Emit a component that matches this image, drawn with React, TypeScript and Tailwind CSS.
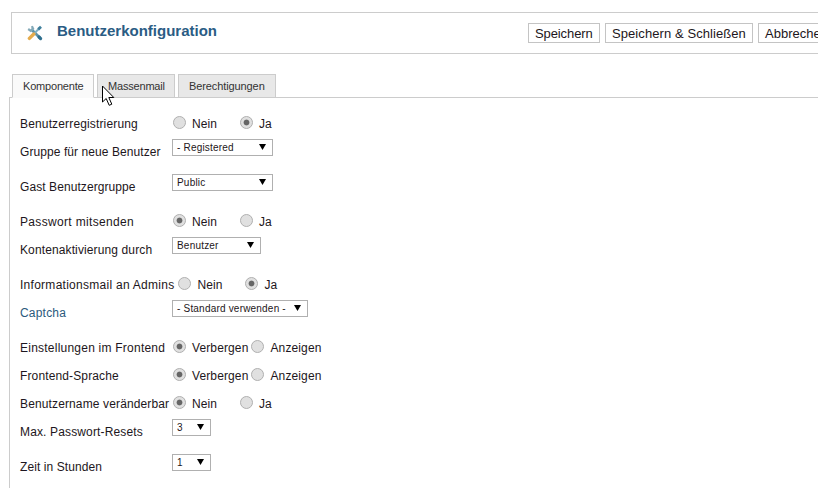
import React from "react";

type Field = {
    label: string;
    labelClass?: string;
    options?: string[];
    selected?: number;
    value?: string;
    width?: string;
};

const FIELDS: Field[] = [
    { label: "Benutzerregistrierung", labelClass: "tracking-[0.15px]", options: ["Nein", "Ja"], selected: 1 },
    { label: "Gruppe für neue Benutzer", labelClass: "tracking-[0.08px]", value: "- Registered", width: "w-[101px]" },
    { label: "Gast Benutzergruppe", labelClass: "tracking-[0.08px]", value: "Public", width: "w-[101px]" },
    { label: "Passwort mitsenden", labelClass: "tracking-[0.33px]", options: ["Nein", "Ja"], selected: 0 },
    { label: "Kontenaktivierung durch", labelClass: "tracking-[0.12px]", value: "Benutzer", width: "w-[89px]" },
    { label: "Informationsmail an Admins", labelClass: "tracking-[0.27px] pr-[3px]", options: ["Nein", "Ja"], selected: 1 },
    { label: "Captcha", labelClass: "text-[#2c5a7c]", value: "- Standard verwenden -", width: "w-[136px]" },
    { label: "Einstellungen im Frontend", labelClass: "tracking-[0.23px]", options: ["Verbergen", "Anzeigen"], selected: 0 },
    { label: "Frontend-Sprache", labelClass: "tracking-[0.13px]", options: ["Verbergen", "Anzeigen"], selected: 0 },
    { label: "Benutzername veränderbar", labelClass: "tracking-[0.13px]", options: ["Nein", "Ja"], selected: 0 },
    { label: "Max. Passwort-Resets", labelClass: "tracking-[0.14px]", value: "3", width: "w-[39px]" },
    { label: "Zeit in Stunden", labelClass: "tracking-[0.08px]", value: "1", width: "w-[39px]" },
];

const TABS = [
    { label: "Komponente", className: "w-[82px] tracking-[-0.19px]" },
    { label: "Massenmail", className: "w-[78px] tracking-[-0.19px]" },
    { label: "Berechtigungen", className: "w-[98px] tracking-[-0.1px]" },
];

const ACTIONS = [
    { label: "Speichern", className: "w-[72px] tracking-[-0.1px]" },
    { label: "Speichern & Schließen", className: "w-[148px] tracking-[0.08px]" },
    { label: "Abbrechen", className: "w-[76px]" },
];

function ToolsIcon() {
    return (
        <svg width="16" height="16" viewBox="0 0 16 16" fill="none">
            <path d="M5 5l8 8" stroke="#5f93a8" strokeWidth="2.8" strokeLinecap="round" />
            <path d="M1.2 4l2.5 1.8 2.4-2.1-1.2-2.6" stroke="#84a9b8" strokeWidth="2.2" />
            <path d="M7.5 8.2l4.8-5" stroke="#7fb0c4" strokeWidth="2" />
            <path d="M11.2 4.4l2.8-2.6" stroke="#3f7f9c" strokeWidth="2.8" />
            <path d="M2.4 13.4l4.4-4.4" stroke="#e5ac4d" strokeWidth="3.4" strokeLinecap="round" />
            <path d="M12 12l1.6 1.6" stroke="#2f6f8e" strokeWidth="3.2" strokeLinecap="round" />
        </svg>
    );
}

function Radio({ name, label, checked }: { name: string; label: string; checked: boolean }) {
    return (
        <label className="flex min-w-[67px] pr-[3px] whitespace-nowrap">
            <input
                type="radio"
                name={name}
                defaultChecked={checked}
                className="mt-[5.5px] mr-1.5 size-[13px] shrink-0 appearance-none rounded-full border border-[#b0b0b0] bg-[#e0e0e0] checked:bg-[radial-gradient(circle,#666_0_2.5px,#e0e0e0_3.3px)]"
            />
            <span className="pt-[6px] tracking-[0.12px]">{label}</span>
        </label>
    );
}

function SelectBox({ value, width }: { value: string; width?: string }) {
    return (
        <button
            type="button"
            className={`mt-px flex h-[17px] items-center justify-between border border-[#b0b0b0] bg-white pl-1 pr-1.5 text-[10px] leading-[15px] tracking-[0.2px] whitespace-nowrap ${width}`}
        >
            <span>{value}</span>
            <svg width="7" height="6" viewBox="0 0 7 6" className="-mt-px shrink-0">
                <path d="M0 0h7L3.5 6z" fill="#000" />
            </svg>
        </button>
    );
}

function FieldRow({ field }: { field: Field }) {
    return (
        <div className={`flex items-start ${field.options ? "h-7" : "h-[35px]"}`}>
            <span className={`min-w-[152px] pt-[6px] whitespace-nowrap ${field.labelClass}`}>{field.label}</span>
            {field.options ? (
                <div className="ml-px flex">
                    {field.options.map((option, i) => (
                        <Radio key={option} name={field.label} label={option} checked={i === field.selected} />
                    ))}
                </div>
            ) : (
                <SelectBox value={field.value ?? ""} width={field.width} />
            )}
        </div>
    );
}

/* Standard arrow pointer, resting on the second tab */
function Pointer() {
    return (
        <svg className="absolute top-[10px] left-[4px] z-10" width="13" height="21" viewBox="0 0 13 21">
            <path d="M.5 1v16l3.7-3.5 3 6.8 2.6-1.1-3-6.7h5z" fill="#fff" stroke="#000" strokeWidth="1" />
        </svg>
    );
}

export default function App() {
    return (
        <div className="flex h-[488px] flex-col overflow-hidden bg-white pt-3 font-['Liberation_Sans',Arial,sans-serif] text-[#1d1620]">
            <header className="ml-[11px] flex h-[42px] shrink-0 items-center border border-r-0 border-[#ccc]">
                <div className="flex w-[516px] shrink-0 items-center pl-[15px]">
                    <ToolsIcon />
                    <h1 className="-mt-[4px] ml-[14px] text-[15px] leading-5 font-bold text-[#2a5c84]">
                        Benutzerkonfiguration
                    </h1>
                </div>
                <div className="flex gap-[5px]">
                    {ACTIONS.map((action) => (
                        <button
                            key={action.label}
                            type="button"
                            className={`h-5 shrink-0 border border-[#c4c4c4] pt-px pl-1.5 text-left text-[13px] leading-[18px] whitespace-nowrap ${action.className}`}
                        >
                            {action.label}
                        </button>
                    ))}
                </div>
            </header>

            <nav className="z-10 mt-5 ml-3 flex h-6 shrink-0 gap-[3px] text-[11px] leading-[23px] text-[#333]">
                {TABS.map((tab, i) => (
                    <div
                        key={tab.label}
                        className={`relative border border-[#ccc] pl-2.5 ${tab.className} ${i === 0 ? "border-b-[#fafafa] bg-[#fafafa]" : "bg-[#e8e8e8]"}`}
                    >
                        {tab.label}
                        {i === 1 && <Pointer />}
                    </div>
                ))}
            </nav>

            <main className="-mt-px ml-[9px] flex-1 border-t border-l border-[#ccc] pt-3 pl-2.5 text-[12px] leading-4 tracking-[0.2px]">
                {FIELDS.map((field) => (
                    <FieldRow key={field.label} field={field} />
                ))}
            </main>
        </div>
    );
}
